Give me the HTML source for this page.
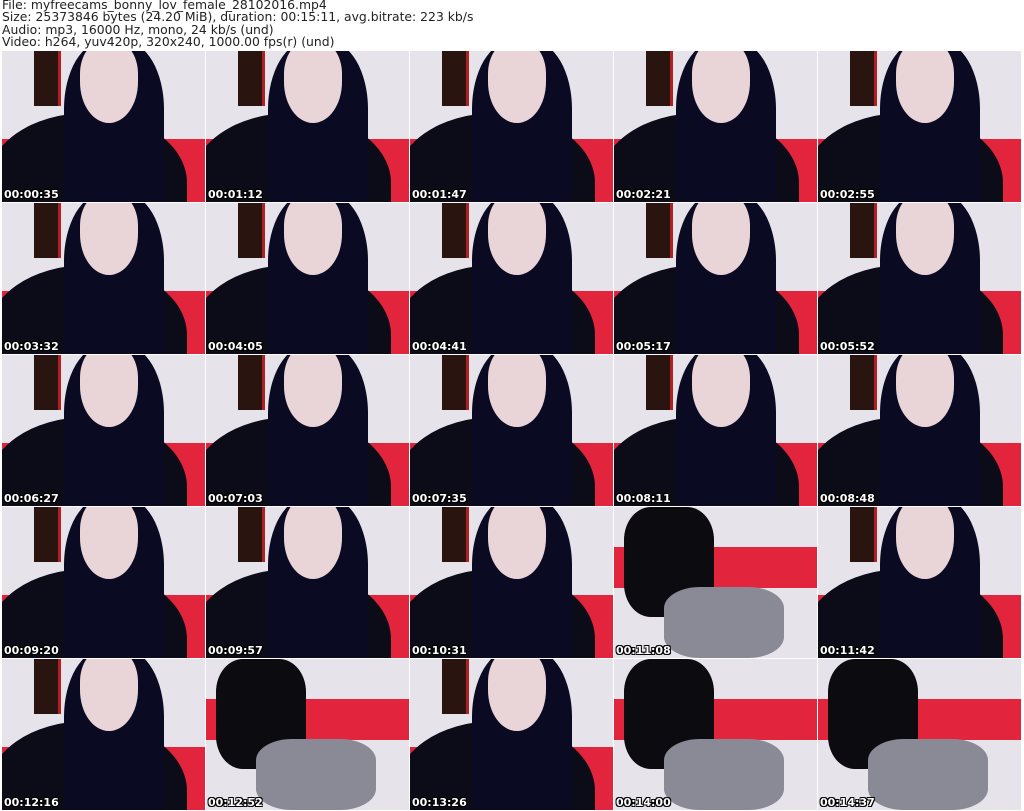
<!DOCTYPE html><html><head><meta charset="utf-8"><style>
html,body{margin:0;width:1024px;height:811px;overflow:hidden}
body{background:#fff;position:relative;font-family:"DejaVu Sans","Liberation Sans",sans-serif}
.hd{position:absolute;left:2px;top:-1px;font-size:12.4px;line-height:12.3px;color:#222;white-space:pre}
.t{position:absolute;width:203px;height:151px;overflow:hidden;background:#e6e3ea}
.t div{position:absolute}
.red{left:0;right:0;top:88px;bottom:0;background:#e2243c}
.post{left:32px;top:0;width:24px;height:55px;background:#2a1410;border-right:3px solid #b02020}
.body{left:-15px;top:62px;width:200px;height:140px;background:#0c0c18;border-radius:50% 50% 0 0}
.hair{left:62px;top:-10px;width:100px;height:170px;background:#0a0a22;border-radius:40% 40% 10% 10%}
.face{left:78px;top:-10px;width:58px;height:82px;background:#e9d4d8;border-radius:40% 40% 50% 50%}
.fb .red{top:40px;bottom:70px}
.fb .blk{left:10px;top:0;width:90px;height:110px;background:#0b0b10;border-radius:30%}
.fb .sk{left:50px;top:80px;width:120px;height:71px;background:#8a8a96;border-radius:30%}
.ts{position:absolute;left:2px;bottom:1px;color:#fff;font-weight:bold;font-size:11px;text-shadow:1px 1px 0 #000,-1px -1px 0 #000,1px -1px 0 #000,-1px 1px 0 #000}
</style></head><body>
<div class="hd">File: myfreecams_bonny_lov_female_28102016.mp4
Size: 25373846 bytes (24.20 MiB), duration: 00:15:11, avg.bitrate: 223 kb/s
Audio: mp3, 16000 Hz, mono, 24 kb/s (und)
Video: h264, yuv420p, 320x240, 1000.00 fps(r) (und)</div>
<script>
var ts=["00:00:35","00:01:12","00:01:47","00:02:21","00:02:55","00:03:32","00:04:05","00:04:41","00:05:17","00:05:52","00:06:27","00:07:03","00:07:35","00:08:11","00:08:48","00:09:20","00:09:57","00:10:31","00:11:08","00:11:42","00:12:16","00:12:52","00:13:26","00:14:00","00:14:37"];
var fb={18:1,21:1,23:1,24:1};
var h="";
for(var i=0;i<25;i++){var c=i%5,r=Math.floor(i/5);var x=2+c*204,y=51+r*152;
if(fb[i]) h+='<div class="t fb" style="left:'+x+'px;top:'+y+'px"><div class="red"></div><div class="blk"></div><div class="sk"></div><div class="ts">'+ts[i]+'</div></div>';
else h+='<div class="t" style="left:'+x+'px;top:'+y+'px"><div class="red"></div><div class="post"></div><div class="body"></div><div class="hair"></div><div class="face"></div><div class="ts">'+ts[i]+'</div></div>';}
document.write(h);
</script>
</body></html>
